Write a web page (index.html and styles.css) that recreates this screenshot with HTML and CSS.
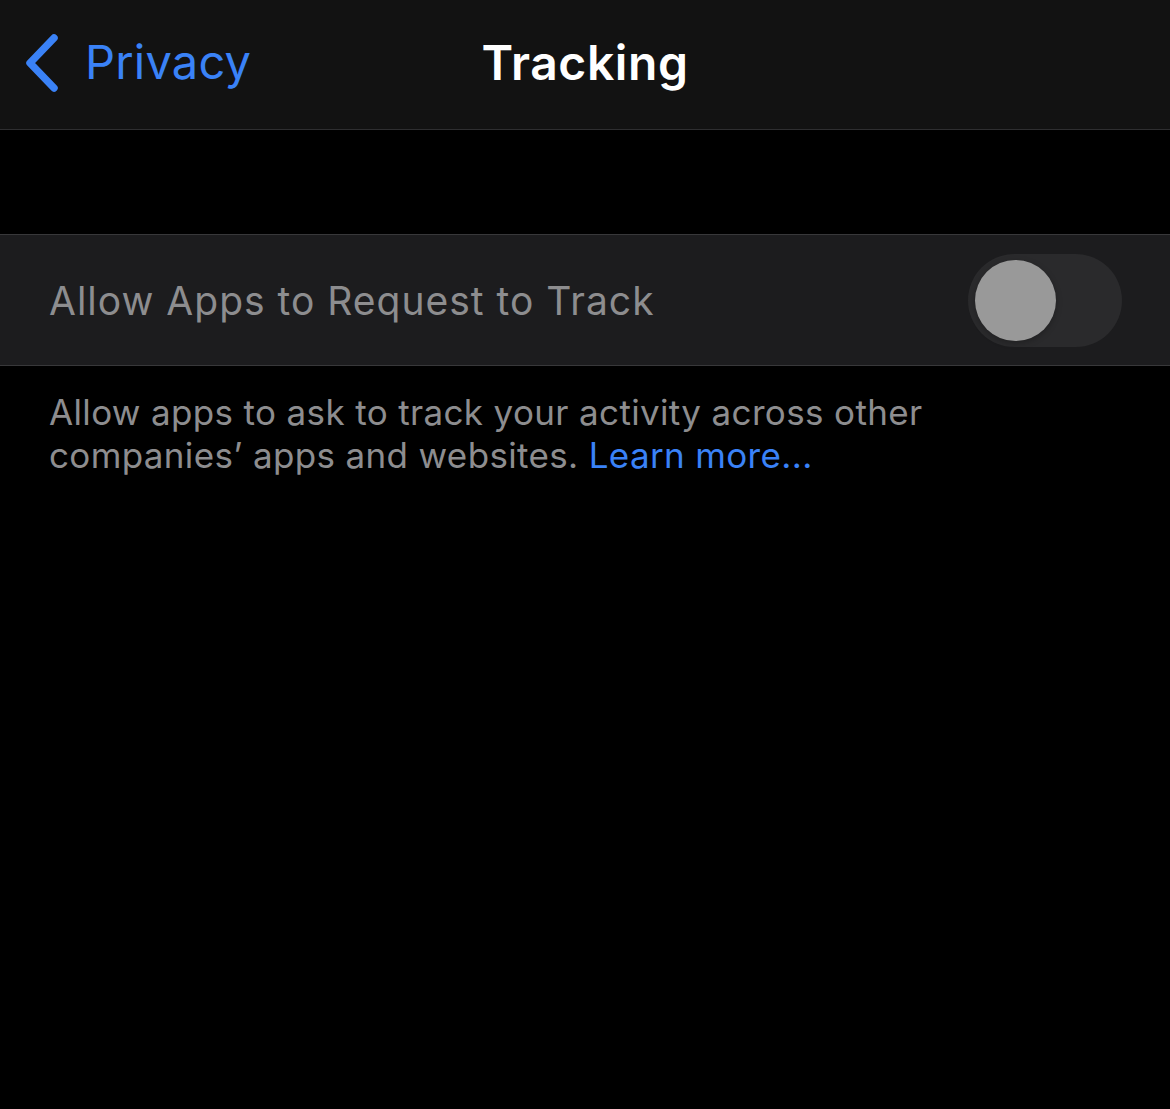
FILE: index.html
```html
<!DOCTYPE html>
<html lang="en">
<head>
    <meta charset="UTF-8">
    <meta name="viewport" content="width=device-width, initial-scale=1.0">
    <title>Tracking</title>
    <link rel="stylesheet" href="styles.css">
</head>
<body>
    <header class="nav-bar">
        <a class="back-link" href="#">
            <svg class="chevron" width="40" height="60" viewBox="0 0 40 60">
                <path d="M32 5 L8 30 L32 55" fill="none" stroke="#3a82f7" stroke-width="7.5" stroke-linecap="round" stroke-linejoin="round"/>
            </svg>
            <span>Privacy</span>
        </a>
        <h1 class="nav-title">Tracking</h1>
    </header>

    <div class="spacer"></div>

    <section class="settings-group">
        <div class="settings-row">
            <span class="row-label">Allow Apps to Request to Track</span>
            <div class="switch">
                <div class="knob"></div>
            </div>
        </div>
    </section>

    <div class="group-footer">
        <span>Allow apps to ask to track your activity across other companies’ apps and websites.</span>
        <a href="#" class="learn-more">Learn more...</a>
    </div>
</body>
</html>
```

FILE: styles.css
```css
* {
    margin: 0;
    padding: 0;
    box-sizing: border-box;
    font-family: Inter, 'Noto Sans', sans-serif;
}

body {
    background-color: #000;
    color: #fff;
}

.nav-bar {
    height: 130px;
    background-color: #121212;
    border-bottom: 1px solid #2e2e30;
    display: flex;
    align-items: center;
    justify-content: center;
    position: relative;
}

.back-link {
    position: absolute;
    left: 22px;
    top: 33px;
    display: flex;
    align-items: center;
    gap: 23px;
    color: #3a82f7;
    text-decoration: none;
    font-size: 47px;
    letter-spacing: 0.2px;
}

.back-link span {
    margin-top: -4px;
}

.nav-title {
    font-size: 48px;
    font-weight: 600;
    letter-spacing: 0.6px;
    margin-top: -4px;
}

.spacer {
    height: 104px;
}

.settings-group {
    background-color: #1c1c1e;
    border-top: 1px solid #38383a;
    border-bottom: 1px solid #38383a;
}

.settings-row {
    height: 130px;
    display: flex;
    align-items: center;
    justify-content: space-between;
    padding: 0 48px 0 49px;
}

.row-label {
    font-size: 39px;
    color: #8d8d8f;
    letter-spacing: 1px;
}

.switch {
    width: 154px;
    height: 93px;
    border-radius: 47px;
    background-color: #2a2a2c;
    display: flex;
    align-items: center;
    padding-left: 7px;
}

.knob {
    width: 81px;
    height: 81px;
    border-radius: 50%;
    background-color: #999999;
    box-shadow: 0 2px 6px rgba(0, 0, 0, 0.25);
}

.group-footer {
    padding: 25px 40px 0 49px;
    font-size: 35px;
    line-height: 43px;
    color: #8d8d8f;
    letter-spacing: 0.35px;
    max-width: 980px;
}

.learn-more {
    color: #3a82f7;
    text-decoration: none;
}
```
